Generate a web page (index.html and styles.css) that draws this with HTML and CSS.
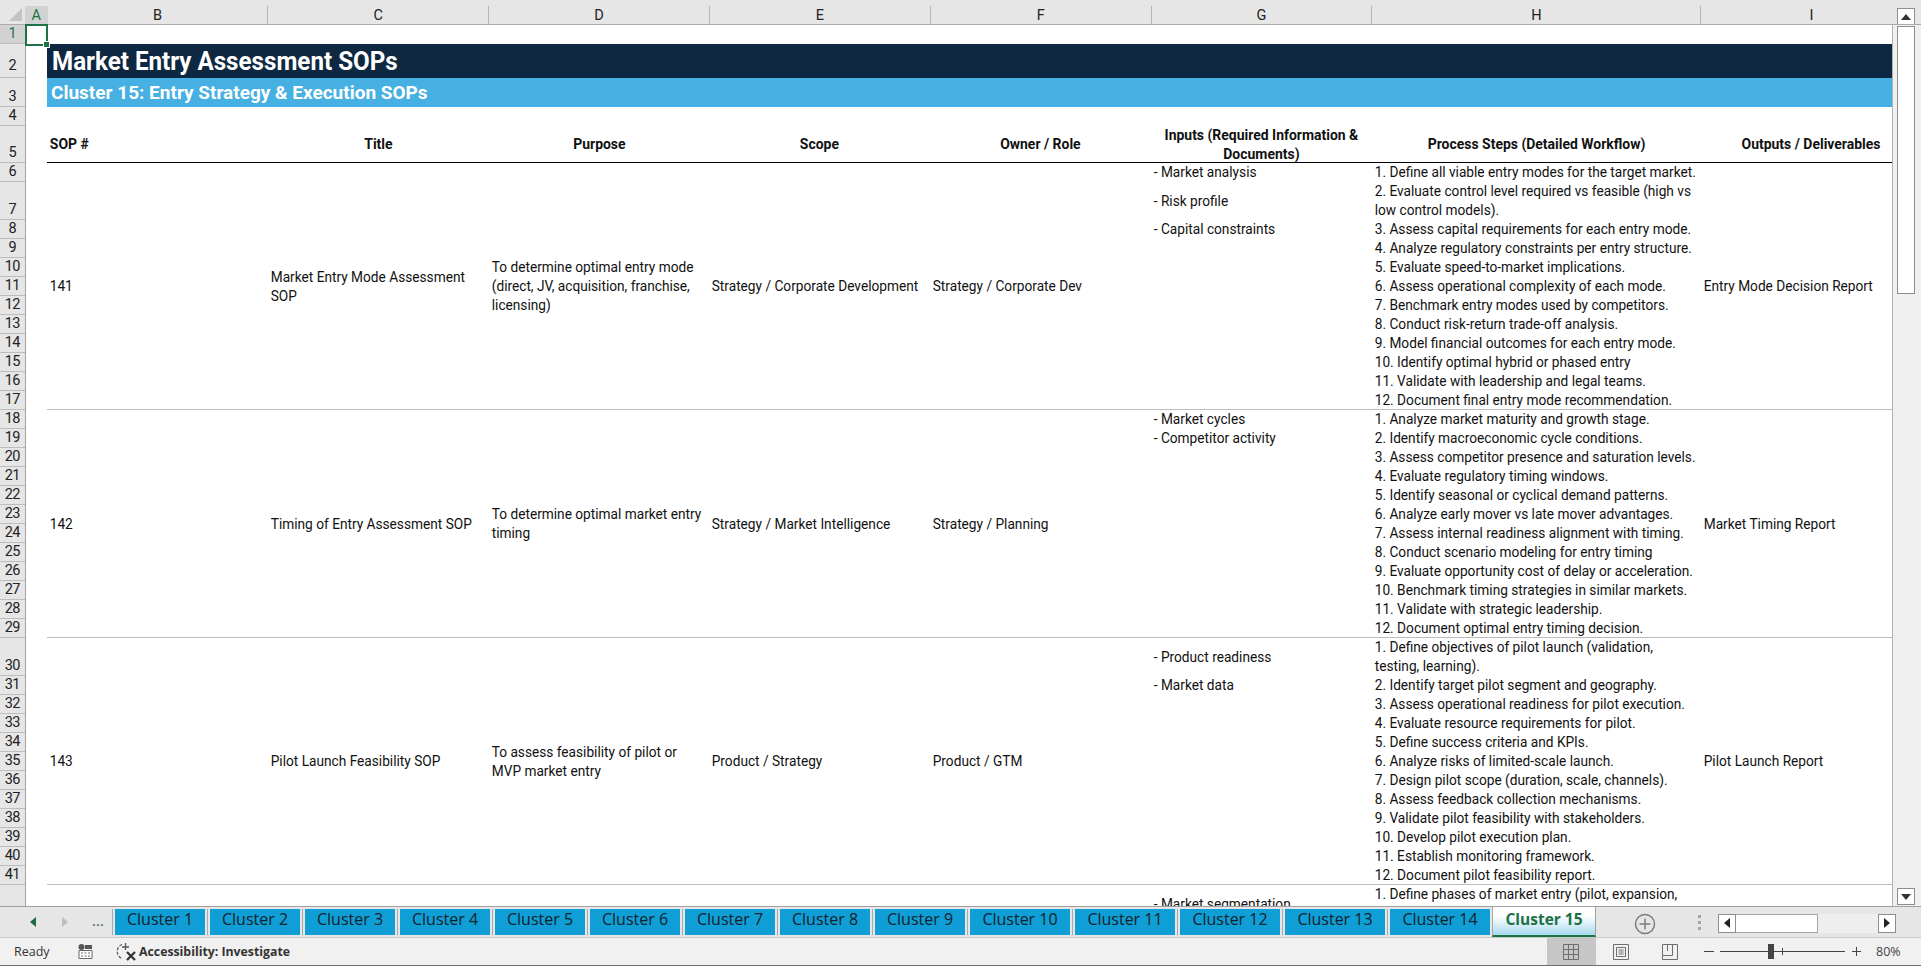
FILE: index.html
```html
<!DOCTYPE html>
<html lang="en">
<head>
<meta charset="utf-8">
<title>Market Entry Assessment SOPs</title>
<link rel="stylesheet" href="styles.css">
</head>
<body>
<div class="app">
  <div class="colbar">
    <div class="corner"><svg class="corner-tri" width="13" height="13" viewBox="0 0 13 13"><path d="M13 0V13H0Z" fill="#c4c4c4"/></svg></div>
    <div class="colhead col-a">A</div>
    <div class="colhead col-std">B</div>
    <div class="colhead col-std">C</div>
    <div class="colhead col-std">D</div>
    <div class="colhead col-std">E</div>
    <div class="colhead col-std">F</div>
    <div class="colhead col-std">G</div>
    <div class="colhead col-h">H</div>
    <div class="colhead col-i">I</div>
    <div class="vbar-top"><div class="sbtn"><svg width="10" height="6" viewBox="0 0 10 6"><path d="M5 0L10 6H0Z" fill="#333"/></svg></div></div>
  </div>
  <div class="main">
    <div class="selection"><span class="handle"></span></div>
    <div class="rowheads">
      <div class="rh h19 rh-sel">1</div>
      <div class="rh h34 rh-lift">2</div>
      <div class="rh h29">3</div>
      <div class="rh h19">4</div>
      <div class="rh h37">5</div>
      <div class="rh h19">6</div>
      <div class="rh h38">7</div>
      <div class="rh h19">8</div>
      <div class="rh h19">9</div>
      <div class="rh h19">10</div>
      <div class="rh h19">11</div>
      <div class="rh h19">12</div>
      <div class="rh h19">13</div>
      <div class="rh h19">14</div>
      <div class="rh h19">15</div>
      <div class="rh h19">16</div>
      <div class="rh h19">17</div>
      <div class="rh h19">18</div>
      <div class="rh h19">19</div>
      <div class="rh h19">20</div>
      <div class="rh h19">21</div>
      <div class="rh h19">22</div>
      <div class="rh h19">23</div>
      <div class="rh h19">24</div>
      <div class="rh h19">25</div>
      <div class="rh h19">26</div>
      <div class="rh h19">27</div>
      <div class="rh h19">28</div>
      <div class="rh h19">29</div>
      <div class="rh h38">30</div>
      <div class="rh h19">31</div>
      <div class="rh h19">32</div>
      <div class="rh h19">33</div>
      <div class="rh h19">34</div>
      <div class="rh h19">35</div>
      <div class="rh h19">36</div>
      <div class="rh h19">37</div>
      <div class="rh h19">38</div>
      <div class="rh h19">39</div>
      <div class="rh h19">40</div>
      <div class="rh h19">41</div>
    </div>
    <div class="sheet">
      <div class="spacer h19"></div>
      <div class="band band-dark"><span class="band-text">Market Entry Assessment SOPs</span></div>
      <div class="band band-light"><span class="band-text">Cluster 15: Entry Strategy &amp; Execution SOPs</span></div>
      <div class="spacer h19"></div>
      <div class="cols header-row">
        <div class="cell">SOP #</div>
        <div class="cell ctr">Title</div>
        <div class="cell ctr">Purpose</div>
        <div class="cell ctr">Scope</div>
        <div class="cell ctr">Owner / Role</div>
        <div class="cell ctr">Inputs (Required Information &amp;<br>Documents)</div>
        <div class="cell ctr">Process Steps (Detailed Workflow)</div>
        <div class="cell ctr">Outputs / Deliverables</div>
      </div>

      <div class="cols rec rec-13">
        <div class="cell">141</div>
        <div class="cell">Market Entry Mode Assessment<br>SOP</div>
        <div class="cell">To determine optimal entry mode<br>(direct, JV, acquisition, franchise,<br>licensing)</div>
        <div class="cell">Strategy / Corporate Development</div>
        <div class="cell">Strategy / Corporate Dev</div>
        <div class="cell top">
          <div class="line">- Market analysis</div>
          <div class="line tall">- Risk profile</div>
          <div class="line">- Capital constraints</div>
        </div>
        <div class="cell top steps">1. Define all viable entry modes for the target market.<br>2. Evaluate control level required vs feasible (high vs<br>low control models).<br>3. Assess capital requirements for each entry mode.<br>4. Analyze regulatory constraints per entry structure.<br>5. Evaluate speed-to-market implications.<br>6. Assess operational complexity of each mode.<br>7. Benchmark entry modes used by competitors.<br>8. Conduct risk-return trade-off analysis.<br>9. Model financial outcomes for each entry mode.<br>10. Identify optimal hybrid or phased entry<br>11. Validate with leadership and legal teams.<br>12. Document final entry mode recommendation.</div>
        <div class="cell">Entry Mode Decision Report</div>
      </div>

      <div class="cols rec rec-12">
        <div class="cell">142</div>
        <div class="cell">Timing of Entry Assessment SOP</div>
        <div class="cell">To determine optimal market entry<br>timing</div>
        <div class="cell">Strategy / Market Intelligence</div>
        <div class="cell">Strategy / Planning</div>
        <div class="cell top">
          <div class="line">- Market cycles</div>
          <div class="line">- Competitor activity</div>
        </div>
        <div class="cell top steps">1. Analyze market maturity and growth stage.<br>2. Identify macroeconomic cycle conditions.<br>3. Assess competitor presence and saturation levels.<br>4. Evaluate regulatory timing windows.<br>5. Identify seasonal or cyclical demand patterns.<br>6. Analyze early mover vs late mover advantages.<br>7. Assess internal readiness alignment with timing.<br>8. Conduct scenario modeling for entry timing<br>9. Evaluate opportunity cost of delay or acceleration.<br>10. Benchmark timing strategies in similar markets.<br>11. Validate with strategic leadership.<br>12. Document optimal entry timing decision.</div>
        <div class="cell">Market Timing Report</div>
      </div>

      <div class="cols rec rec-13">
        <div class="cell">143</div>
        <div class="cell">Pilot Launch Feasibility SOP</div>
        <div class="cell">To assess feasibility of pilot or<br>MVP market entry</div>
        <div class="cell">Product / Strategy</div>
        <div class="cell">Product / GTM</div>
        <div class="cell top">
          <div class="line tall">- Product readiness</div>
          <div class="line">- Market data</div>
        </div>
        <div class="cell top steps">1. Define objectives of pilot launch (validation,<br>testing, learning).<br>2. Identify target pilot segment and geography.<br>3. Assess operational readiness for pilot execution.<br>4. Evaluate resource requirements for pilot.<br>5. Define success criteria and KPIs.<br>6. Analyze risks of limited-scale launch.<br>7. Design pilot scope (duration, scale, channels).<br>8. Assess feedback collection mechanisms.<br>9. Validate pilot feasibility with stakeholders.<br>10. Develop pilot execution plan.<br>11. Establish monitoring framework.<br>12. Document pilot feasibility report.</div>
        <div class="cell">Pilot Launch Report</div>
      </div>

      <div class="cols rec rec-last">
        <div class="cell"></div>
        <div class="cell"></div>
        <div class="cell"></div>
        <div class="cell"></div>
        <div class="cell"></div>
        <div class="cell top"><div class="line tall">- Market segmentation</div></div>
        <div class="cell top steps">1. Define phases of market entry (pilot, expansion,</div>
        <div class="cell"></div>
      </div>
    </div>
    <div class="vbar">
      <div class="vthumb"></div>
      <div class="sbtn sbtn-down"><svg width="10" height="6" viewBox="0 0 10 6"><path d="M5 6L0 0H10Z" fill="#333"/></svg></div>
    </div>
  </div>

  <div class="tabbar">
    <div class="tabnav">
      <svg width="6" height="10" viewBox="0 0 6 10"><path d="M6 0V10L0 5Z" fill="#1e6b41"/></svg>
      <svg width="6" height="10" viewBox="0 0 6 10"><path d="M0 0V10L6 5Z" fill="#bdbdbd"/></svg>
      <span class="tabdots">...</span>
    </div>
    <div class="tab">Cluster 1</div>
    <div class="tab">Cluster 2</div>
    <div class="tab">Cluster 3</div>
    <div class="tab">Cluster 4</div>
    <div class="tab">Cluster 5</div>
    <div class="tab">Cluster 6</div>
    <div class="tab">Cluster 7</div>
    <div class="tab">Cluster 8</div>
    <div class="tab">Cluster 9</div>
    <div class="tab tab-wide">Cluster 10</div>
    <div class="tab tab-wide">Cluster 11</div>
    <div class="tab tab-wide">Cluster 12</div>
    <div class="tab tab-wide">Cluster 13</div>
    <div class="tab tab-wide">Cluster 14</div>
    <div class="tab-active">Cluster 15</div>
    <svg class="addsheet" width="22" height="22" viewBox="0 0 22 22" fill="none" stroke="#7d7d7d"><circle cx="11" cy="11" r="9.5" stroke-width="1.5"/><path d="M11 5.5V16.5M5.5 11H16.5" stroke-width="1.5"/></svg>
    <div class="vdots"><i></i><i></i><i></i></div>
    <div class="hbar">
      <div class="hbtn"><svg width="6" height="10" viewBox="0 0 6 10"><path d="M6 0V10L0 5Z" fill="#222"/></svg></div>
      <div class="hthumb"></div>
      <div class="htrack"></div>
      <div class="hbtn"><svg width="6" height="10" viewBox="0 0 6 10"><path d="M0 0V10L6 5Z" fill="#222"/></svg></div>
    </div>
  </div>

  <div class="statusbar">
    <span class="st-ready">Ready</span>
    <svg class="st-macro" width="15" height="15" viewBox="0 0 15 15"><circle cx="3.5" cy="3" r="3" fill="#555"/><path d="M7 1H14V5H7Z" fill="#555"/><path d="M1 6.5H14V14.5H1Z" fill="#fff" stroke="#666"/><path d="M3 9H5M6.5 9H8.5M10 9H12M3 12H5M6.5 12H8.5M10 12H12" stroke="#666"/></svg>
    <svg class="st-acc" width="21" height="19" viewBox="0 0 21 19" fill="none" stroke="#555" stroke-width="1.2"><path d="M6 2.5A7.5 7.5 0 0 0 6 16.5" stroke-dasharray="3 1.6"/><path d="M9.5 1V8M6 5H13" stroke-width="1.3"/><path d="M11 10L19 18M19 10L11 18" stroke="#333" stroke-width="2.2"/></svg>
    <span class="st-acc-text">Accessibility: Investigate</span>
    <div class="st-right">
      <div class="view view-on"><svg width="16" height="16" viewBox="0 0 16 16" fill="none" stroke="#6e6e6e"><path d="M.5.5H15.5V15.5H.5ZM5.5.5V15.5M10.5.5V15.5M.5 5.5H15.5M.5 10.5H15.5"/></svg></div>
      <div class="view"><svg width="16" height="16" viewBox="0 0 16 16" fill="none" stroke="#6e6e6e"><path d="M.5.5H15.5V15.5H.5Z"/><path d="M3.5 3.5H12.5V12.5H3.5ZM5.5 6H10.5M5.5 8H10.5M5.5 10H10.5"/></svg></div>
      <div class="view"><svg width="16" height="16" viewBox="0 0 16 16" fill="none" stroke="#6e6e6e"><path d="M.5.5H15.5V15.5H.5ZM.5 11.5H10.5V.5M5.5.5V7"/></svg></div>
      <div class="zoomctl">
        <span class="zoom-minus"></span>
        <div class="slider"><span class="slider-tick"></span><span class="slider-thumb"></span></div>
        <svg class="zoom-plus" width="9" height="9" viewBox="0 0 9 9"><path d="M4.5 0V9M0 4.5H9" stroke="#444" stroke-width="1"/></svg>
        <span class="zoom-pct">80%</span>
      </div>
    </div>
  </div>
</div>
</body>
</html>
```

FILE: styles.css
```css
* { box-sizing: border-box; }
html, body { margin: 0; padding: 0; background: #fff; }
body { width: 1921px; height: 966px; overflow: hidden; font-family: Roboto, "Liberation Sans", sans-serif; color: #111; }
.app { width: 1921px; height: 966px; display: flex; flex-direction: column; overflow: hidden; }

/* column header strip */
.colbar { height: 25px; flex: none; display: flex; background: #e6e6e6; padding-top: 6px; border-bottom: 1px solid #ababab; position: relative; overflow: hidden; }
.corner { width: 25px; flex: none; display: flex; align-items: flex-end; justify-content: flex-end; padding: 0 3px 3px 0; }
.colhead { display: flex; flex: none; align-items: center; justify-content: center; font-size: 14.5px; color: #222; border-right: 1px solid #b5b5b5; height: 18px; }
.col-a { width: 22.5px; background: #d2d2d2; color: #1e7145; border-right: 0; }
.col-std { width: 220.83px; }
.col-h { width: 329px; }
.col-i { width: 220px; border-right: 0; }
.vbar-top { position: absolute; right: 0; top: 0; width: 28px; height: 25px; background: #e6e6e6; padding: 8px 0 0 4px; }
.sbtn { width: 18px; height: 18px; background: #fff; border: 1px solid #8e8e8e; display: flex; align-items: center; justify-content: center; }

/* body */
.main { height: 881px; flex: none; display: flex; position: relative; }
.rowheads { width: 25.5px; flex: none; background: #e6e6e6; border-right: 1.5px solid #a3a3a3; overflow: hidden; }
.rh { display: flex; align-items: flex-end; justify-content: center; font-size: 14.5px; letter-spacing: -0.6px; line-height: 18px; color: #222; border-bottom: 1px solid #bdbdbd; }
.rh-sel { background: #d2d2d2; color: #1e7145; }
.rh-lift { padding-bottom: 2px; }
.h19 { height: 19px; }
.h29 { height: 28.7px; }
.h34 { height: 34px; }
.h37 { height: 37.6px; }
.h38 { height: 38px; }

.selection { position: absolute; left: 24.5px; top: -1px; width: 23.5px; height: 21.5px; border: 2px solid #1e7145; z-index: 2; }
.handle { position: absolute; right: -4px; bottom: -4px; width: 7px; height: 7px; background: #1e7145; border: 1px solid #fff; }
.sheet { width: 1867.5px; flex: none; height: 881px; overflow: hidden; border-right: 1px solid #b0b0b0; }
.spacer { flex: none; }
.band { margin-left: 21.5px; color: #fff; font-weight: 700; white-space: nowrap; display: flex; align-items: center; }
.band-text { display: block; transform-origin: left center; }
.band-dark { height: 34px; background: #0e2841; font-size: 25px; padding-left: 5px; }
.band-dark .band-text { transform: scaleX(0.967); }
.band-light { height: 28.7px; background: #45b0e1; font-size: 19px; padding-left: 4px; }

.cols { display: grid; grid-template-columns: 220.83px 220.83px 220.83px 220.83px 220.83px 220.83px 329px 220px; margin-left: 21.5px; }
.header-row { height: 37.6px; font-weight: 700; border-bottom: 1.5px solid #000; }
.rec { border-bottom: 1.5px solid #bcbcbc; }
.rec-13 { height: 247px; }
.rec-12 { height: 228px; }
.rec-last { height: 60px; border-bottom: 0; }
.cell { padding: 0 2px 0 3px; font-size: 15px; line-height: 19px; white-space: nowrap; align-self: center; transform: scaleX(0.912); transform-origin: left center; }
.header-row .cell { transform: scaleX(0.93); }
.ctr { padding: 0 2px; text-align: center; transform-origin: center center; }
.header-row .ctr { transform-origin: center center; }
.top { align-self: start; }
.line { height: 19px; }
.tall { height: 38px; line-height: 38px; }

.vbar { flex: 1; background: #f0f0f0; display: flex; flex-direction: column; justify-content: space-between; padding: 1px 0 1px 4px; }
.vthumb { width: 18px; height: 268px; background: #fff; border: 1px solid #8e8e8e; }
.sbtn-down { height: 17px; }

/* tabs */
.tabbar { height: 32px; flex: none; display: flex; align-items: flex-start; background: #e6e6e6; border-top: 1.5px solid #a0a0a0; border-bottom: 1px solid #c8c8c8; padding-top: 1.5px; }
.tabnav { width: 115px; height: 26px; flex: none; display: flex; align-items: center; padding-left: 30px; position: relative; }
.tabnav svg + svg { margin-left: 26px; }
.tabdots { margin-left: 24px; font-size: 15px; color: #1e6b41; font-family: "Open Sans", sans-serif; padding-bottom: 4px; }
.tabnav::after { content: ""; position: absolute; right: 2px; top: 0; bottom: 0; width: 1px; background: #a8a8a8; }
.tab { width: 90px; height: 26px; flex: none; margin-right: 5px; background: #0f9ed5; color: #14222b; font-family: "Open Sans", sans-serif; font-size: 16px; line-height: 20px; text-align: center; position: relative; white-space: nowrap; }
.tab::after { content: ""; position: absolute; right: -3px; top: 0; bottom: 0; width: 1px; background: #a8a8a8; }
.tab-wide { width: 100px; }
.tab-active { width: 104px; height: 30px; flex: none; margin: -1.5px 0 0 -3px; padding-top: 1px; background: linear-gradient(#fff 0%, #fff 30%, #a9dbef 100%); border-left: 1px solid #a0a0a0; border-right: 1px solid #a0a0a0; border-bottom: 2px solid #1e7145; color: #1e7145; font-family: "Open Sans", sans-serif; font-size: 15.5px; font-weight: 700; line-height: 23px; text-align: center; white-space: nowrap; }
.addsheet { margin: 4px 0 0 38px; flex: none; }
.vdots { margin: 6px 0 0 42px; width: 3px; display: flex; flex-direction: column; gap: 3px; flex: none; }
.vdots i { display: block; width: 3px; height: 3px; background: #a5a5a5; }
.hbar { margin: 5px 0 0 17px; width: 178px; height: 19px; display: flex; flex: none; background: #eeeeee; }
.hbtn { width: 18px; height: 19px; flex: none; background: #fff; border: 1px solid #8e8e8e; display: flex; align-items: center; justify-content: center; }
.hthumb { width: 82px; flex: none; background: #fff; border: 1px solid #a5a5a5; border-left: 0; }
.htrack { flex: 1; }

/* status */
.statusbar { height: 28px; flex: none; display: flex; align-items: center; background: #f1f1f1; border-bottom: 1px solid #6d6d6d; font-family: "Open Sans", sans-serif; font-size: 12.5px; color: #333; padding-left: 14px; }
.st-ready { width: 64px; flex: none; }
.st-macro { flex: none; }
.st-acc { margin-left: 23px; flex: none; }
.st-acc-text { margin-left: 2px; font-weight: 700; font-size: 12.3px; white-space: nowrap; }
.st-right { margin-left: auto; display: flex; align-items: center; height: 27px; }
.view { width: 49.5px; height: 27px; display: flex; align-items: center; justify-content: center; }
.view-on { background: #c6c6c6; }
.zoomctl { display: flex; align-items: center; width: 226px; padding-left: 9px; color: #444; }
.zoom-minus { width: 10px; height: 1px; background: #444; flex: none; }
.slider { width: 125px; height: 1px; background: #444; margin-left: 6px; position: relative; flex: none; }
.slider-tick { position: absolute; left: 62px; top: -3px; width: 1px; height: 7px; background: #444; }
.slider-thumb { position: absolute; left: 48px; top: -7px; width: 6px; height: 15px; background: #444; }
.zoom-plus { margin-left: 7px; flex: none; }
.zoom-pct { margin-left: 15px; }
```
